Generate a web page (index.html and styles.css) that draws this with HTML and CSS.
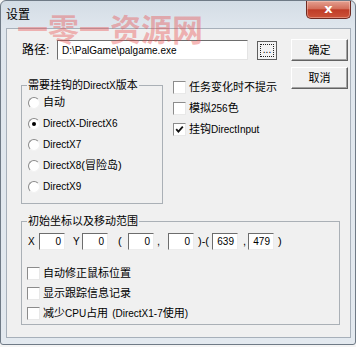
FILE: index.html
```html
<!DOCTYPE html>
<html lang="zh-CN">
<head>
<meta charset="utf-8">
<title>设置</title>
<link rel="stylesheet" href="styles.css">
</head>
<body>
<div class="win">
  <div class="titlebar">
    <span class="title">设置</span>
    <span class="close">x</span>
  </div>
  <div class="client">
    <div class="path-row">
      <span class="path-label">路径:</span>
      <div class="field path-field"><span class="en">D:\PalGame\palgame.exe</span></div>
      <div class="btn-dots"><span class="focus">...</span></div>
      <div class="btn-main">确定</div>
    </div>
    <div class="mid-row">
      <fieldset class="group group-dx">
        <legend>需要挂钩的<span class="en">DirectX</span>版本</legend>
        <div class="opt"><span class="radio"></span>自动</div>
        <div class="opt"><span class="radio on"></span><span class="en">DirectX-DirectX6</span></div>
        <div class="opt"><span class="radio"></span><span class="en">DirectX7</span></div>
        <div class="opt"><span class="radio"></span><span class="en">DirectX8</span>(冒险岛)</div>
        <div class="opt"><span class="radio"></span><span class="en">DirectX9</span></div>
      </fieldset>
      <div class="checks">
        <div class="chk"><span class="box"></span>任务变化时不提示</div>
        <div class="chk"><span class="box"></span>模拟<span class="en">256</span>色</div>
        <div class="chk"><span class="box on"><svg viewBox="0 0 11 11" width="11" height="11"><path d="M2.2 5.2 L4.4 7.6 L8.8 2.6" fill="none" stroke="#111" stroke-width="1.8"/></svg></span>挂钩<span class="en">DirectInput</span></div>
      </div>
      <div class="btn-main">取消</div>
    </div>
    <fieldset class="group group-coord">
      <legend>初始坐标以及移动范围</legend>
      <div class="coord-row">
        <span class="sep sep-x en">X</span>
        <span class="num en">0</span>
        <span class="sep sep-y en">Y</span>
        <span class="num en">0</span>
        <span class="sep sep-open en">(</span>
        <span class="num en">0</span>
        <span class="sep sep-comma en">,</span>
        <span class="num en">0</span>
        <span class="sep sep-mid en">)-(</span>
        <span class="num en">639</span>
        <span class="sep sep-comma2 en">,</span>
        <span class="num en">479</span>
        <span class="sep sep-close en">)</span>
      </div>
      <div class="coord-checks">
        <div class="chk chk-sm"><span class="box"></span>自动修正鼠标位置</div>
        <div class="chk chk-sm"><span class="box"></span>显示跟踪信息记录</div>
        <div class="chk chk-sm"><span class="box"></span>减少<span class="en">CPU</span>占用<span class="gap"></span><span class="en">(DirectX1-7</span>使用<span class="en">)</span></div>
      </div>
    </fieldset>
  </div>
  <div class="watermark">一零一资源网</div>
</div>
</body>
</html>
```

FILE: styles.css
```css
* { box-sizing: border-box; }
html, body { margin: 0; padding: 0; }
body {
  width: 356px;
  height: 347px;
  overflow: hidden;
  background: #f4f4f4;
  font-family: "Liberation Sans", "Noto Sans CJK SC", sans-serif;
  font-size: 11px;
  line-height: 13px;
  color: #000;
}
.en { font-size: 10px; }
.gap { display: inline-block; width: 4px; }

.win {
  position: relative;
  width: 356px;
  height: 345px;
  display: flex;
  flex-direction: column;
  border: 1px solid #6f7a86;
  border-radius: 6px 6px 3px 3px;
  background: linear-gradient(#d3dce5, #dfe6ed 26px, #e3e9ef);
  padding: 0 4px 6px 5px;
}

.titlebar {
  display: flex;
  align-items: flex-start;
  height: 27px;
  margin: 0 -4px 0 -5px;
  padding-left: 5px;
  flex: none;
}
.title {
  margin-top: 5px;
  font-family: "Noto Sans CJK SC", sans-serif;
  font-size: 12px;
  line-height: 16px;
}
.close {
  margin-left: auto;
  margin-right: 4px;
  width: 45px;
  height: 18px;
  border: 1px solid #6e2a22;
  border-top: none;
  border-radius: 0 0 5px 5px;
  background: linear-gradient(#e4a091, #d36f5b 45%, #bf3c27 52%, #cc5339);
  box-shadow: inset 0 0 0 1px rgba(255, 220, 210, 0.4);
  color: #fff;
  font-family: "DejaVu Sans", sans-serif;
  font-weight: bold;
  font-size: 13px;
  line-height: 15px;
  text-align: center;
}

.client {
  flex: 1;
  background: #f0f0f0;
  border: 1px solid #a7b0ba;
  padding: 10px 2px 0 11px;
  display: flex;
  flex-direction: column;
}

.path-row {
  display: flex;
  align-items: center;
  height: 22px;
}
.path-label {
  width: 39px;
  padding-left: 4px;
  font-size: 12px;
}
.field {
  background: #fff;
  border: 1px solid;
  border-color: #6d6d6d #e4e4e4 #e4e4e4 #6d6d6d;
}
.path-field {
  width: 191px;
  height: 20px;
  padding: 3px 0 0 4px;
  line-height: 13px;
}
.btn-dots {
  margin-left: 9px;
  width: 20px;
  height: 19px;
  border: 1px solid #5e5e5e;
  background: #f3f3f3;
  padding: 2px;
  display: flex;
}
.btn-dots .focus {
  flex: 1;
  border: 1px dotted #222;
  font-size: 10px;
  line-height: 10px;
  text-align: center;
  display: flex;
  align-items: flex-end;
  justify-content: center;
  padding-bottom: 1px;
}
.btn-main {
  margin-left: auto;
  width: 57px;
  height: 22px;
  flex: none;
  background: #f0f0f0;
  border: 1px solid;
  border-color: #fff #626262 #626262 #fff;
  box-shadow: inset -1px -1px #a3a3a3;
  text-align: center;
  line-height: 20px;
  font-size: 11px;
}

.mid-row {
  display: flex;
  align-items: flex-start;
  margin-top: 6px;
}
.group {
  margin: 0 0 0 3px;
  padding: 0 0 0 5px;
  border: 1px solid #aab0b6;
  min-width: 0;
}
.group legend {
  padding: 0 1px;
  line-height: 13px;
  font-size: 11px;
}
.group-dx {
  margin-top: 12px;
  width: 142px;
  height: 125px;
}
.opt {
  display: flex;
  align-items: center;
  height: 21px;
  white-space: nowrap;
}
.radio {
  position: relative;
  flex: none;
  width: 12px;
  height: 12px;
  margin: 0 3px 0 1px;
  border-radius: 50%;
  border: 1px solid;
  border-color: #8a8a8a #f2f2f2 #f2f2f2 #8a8a8a;
  background: #fff;
}
.radio.on::after {
  content: "";
  position: absolute;
  left: 3px;
  top: 3px;
  width: 4px;
  height: 4px;
  border-radius: 50%;
  background: #000;
}

.checks {
  margin: 10px 0 0 10px;
}
.chk {
  display: flex;
  align-items: center;
  height: 21px;
  white-space: nowrap;
}
.chk-sm { height: 20px; }
.box {
  flex: none;
  width: 13px;
  height: 13px;
  margin-right: 3px;
  background: #fff;
  border: 1px solid;
  border-color: #8c8c8c #e8e8e8 #e8e8e8 #8c8c8c;
  display: flex;
  align-items: center;
  justify-content: center;
}
.box svg { display: block; }

.group-coord {
  margin-top: 11px;
  width: 319px;
  height: 110px;
}
.coord-row {
  display: flex;
  align-items: center;
  height: 17px;
  margin-top: 5px;
}
.sep { flex: none; line-height: 13px; }
.sep-x { width: 12px; padding-left: 1px; }
.sep-y { width: 17px; padding-left: 8px; }
.sep-open { width: 20px; padding-left: 10px; font-size: 11px; }
.sep-comma { width: 14px; padding-left: 3px; font-size: 11px; }
.sep-mid { width: 18px; padding-left: 4px; font-size: 11px; }
.sep-comma2 { width: 10px; padding-left: 5px; font-size: 11px; }
.sep-close { padding-left: 4px; font-size: 11px; }
.num {
  flex: none;
  width: 26px;
  height: 17px;
  background: #fff;
  border: 1px solid;
  border-color: #6d6d6d #ececec #ececec #6d6d6d;
  text-align: right;
  padding-right: 3px;
  line-height: 15px;
}
.coord-checks { margin-top: 13px; }

.watermark {
  position: absolute;
  left: 16px;
  top: 11px;
  font-family: "Noto Sans CJK SC", sans-serif;
  font-weight: bold;
  font-size: 31px;
  line-height: 31px;
  color: rgba(232, 70, 70, 0.38);
  white-space: nowrap;
  pointer-events: none;
}
```
